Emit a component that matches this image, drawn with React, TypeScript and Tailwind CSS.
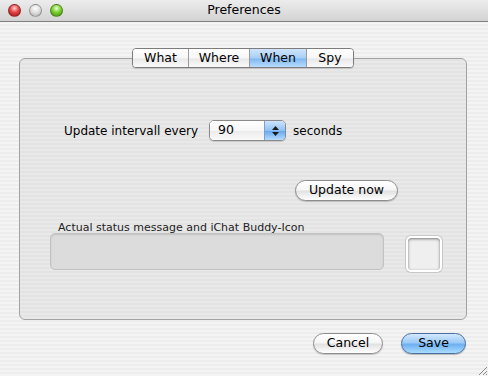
import React, { useState } from 'react';

const stripes =
  'bg-[repeating-linear-gradient(180deg,#ededed_0px,#ededed_2px,#f4f4f4_2px,#f4f4f4_4px)]';

// Aqua の白いボタン
const AquaButton: React.FC<{ label: string; width: string; primary?: boolean }> = ({ label, width, primary }) => (
  <button
    className={`${width} h-[21px] rounded-full border text-[12.5px] leading-none text-black ${
      primary
        ? 'border-[#4a6fa3] bg-[linear-gradient(180deg,#d4e9fd_0%,#9ccaf7_45%,#6fb0f2_55%,#a9dcff_100%)] shadow-[0_1px_1px_rgba(0,0,0,0.25)]'
        : 'border-[#8d8d8d] bg-[linear-gradient(180deg,#ffffff_0%,#f6f6f6_45%,#e2e2e2_55%,#ffffff_100%)] shadow-[0_1px_1px_rgba(0,0,0,0.2)]'
    }`}
  >
    {label}
  </button>
);

const TrafficLight: React.FC<{ color: string }> = ({ color }) => (
  <div className={`w-[13px] h-[13px] rounded-full border border-black/30 ${color}`} />
);

const App: React.FC = () => {
  const [tab, setTab] = useState('When'); // 選択中のタブ
  const tabs = ['What', 'Where', 'When', 'Spy'];
  const tabWidths: Record<string, string> = {
    What: 'w-[55px]',
    Where: 'w-[61px]',
    When: 'w-[57px]',
    Spy: 'w-[47px]',
  };

  return (
    <div className={`w-[488px] h-[376px] overflow-hidden flex flex-col ${stripes} font-['DejaVu_Sans','Liberation_Sans',sans-serif] text-black`}>
      {/* タイトルバー */}
      <div className="relative h-[22px] flex items-center border-b border-[#7f7f7f] bg-[linear-gradient(180deg,#ececec_0%,#e0e0e0_50%,#d2d2d2_100%)]">
        <div className="flex gap-[8px] pl-[8px]">
          <TrafficLight color="bg-[radial-gradient(circle_at_50%_30%,#ffd0d0_0%,#e24545_45%,#a51010_100%)]" />
          <TrafficLight color="bg-[radial-gradient(circle_at_50%_30%,#ffffff_0%,#dcdcdc_50%,#a9a9a9_100%)]" />
          <TrafficLight color="bg-[radial-gradient(circle_at_50%_30%,#eaffcf_0%,#7ccf2f_45%,#3c8a0c_100%)]" />
        </div>
        <div className="absolute inset-0 flex items-center justify-center text-[12.5px] pointer-events-none">
          Preferences
        </div>
      </div>

      {/* タブビュー */}
      <div className="flex flex-col pt-[26px] pl-[19px]">
        <div className="w-[448px] flex justify-center relative z-10 -mb-[10px]">
          <div className="flex h-[20px] rounded-[4px] border border-[#7c7c7c] overflow-hidden shadow-[0_1px_1px_rgba(0,0,0,0.15)]">
            {tabs.map((t, i) => (
              <button
                key={t}
                onClick={() => setTab(t)}
                className={`${tabWidths[t]} flex items-center justify-center text-[12.5px] ${
                  i > 0 ? 'border-l border-[#9a9a9a]' : ''
                } ${
                  tab === t
                    ? 'bg-[linear-gradient(180deg,#cfe4fb_0%,#a8cff7_50%,#80b8f1_55%,#b8dcff_100%)]'
                    : 'bg-[linear-gradient(180deg,#ffffff_0%,#f7f7f7_50%,#e8e8e8_55%,#fafafa_100%)]'
                }`}
              >
                {t}
              </button>
            ))}
          </div>
        </div>

        <div className="w-[448px] h-[262px] rounded-[6px] border border-[#a3a3a3] bg-[repeating-linear-gradient(180deg,#e3e3e3_0px,#e3e3e3_2px,#e9e9e9_2px,#e9e9e9_4px)] flex flex-col">
          {/* 更新間隔 */}
          <div className="flex items-center h-[21px] mt-[61px] pl-[44px] text-[12px]">
            <span>Update intervall every</span>
            <div className="ml-[11px] flex w-[77px] h-[21px] rounded-[5px] border border-[#8a8a8a] overflow-hidden bg-white shadow-[0_1px_1px_rgba(0,0,0,0.15)] text-[12.5px]">
              <div className="flex-1 flex items-center pl-[8px] bg-[linear-gradient(180deg,#ffffff_0%,#f7f7f7_50%,#ececec_55%,#fafafa_100%)]">90</div>
              <div className="w-[21px] flex flex-col items-center justify-center gap-[2px] border-l border-[#7e9fc6] bg-[linear-gradient(180deg,#cfe4fb_0%,#8fc2f6_50%,#6aaaf0_55%,#b5dcff_100%)]">
                <svg width="7" height="4" viewBox="0 0 7 4"><path d="M3.5 0L7 4H0z" fill="#1b1b1b" /></svg>
                <svg width="7" height="4" viewBox="0 0 7 4"><path d="M0 0h7L3.5 4z" fill="#1b1b1b" /></svg>
              </div>
            </div>
            <span className="ml-[7px]">seconds</span>
          </div>

          <div className="flex justify-end mt-[39px] pr-[68px]">
            <AquaButton label="Update now" width="w-[103px]" />
          </div>

          {/* ステータスメッセージ */}
          <div className="mt-[20px] pl-[38px] text-[11px] text-[#222] leading-[14px]">
            Actual status message and iChat Buddy-Icon
          </div>
          <div className="flex items-start pl-[30px] -mt-[2px]">
            <div className="w-[334px] h-[37px] rounded-[5px] border border-[#c2c2c2] bg-[#dcdcdc] shadow-[inset_0_1px_2px_rgba(0,0,0,0.12)]" />
            <div className="ml-[22px] mt-[3px] w-[36px] h-[36px] rounded-[5px] border-2 border-white bg-[#efefef] shadow-[inset_0_1px_3px_rgba(0,0,0,0.5),0_0_0_1px_#c8c8c8]" />
          </div>
        </div>
      </div>

      {/* 下部ボタン */}
      <div className="flex justify-end gap-[18px] pr-[22px] mt-[13px]">
        <AquaButton label="Cancel" width="w-[70px]" />
        <AquaButton label="Save" width="w-[65px]" primary />
      </div>

      {/* リサイズグリップ */}
      <div className="flex justify-end mt-auto">
        <svg width="11" height="11" viewBox="0 0 11 11">
          <path d="M10 2L2 10M10 6L6 10M10 9L9 10" stroke="#8a8a8a" strokeWidth="1" />
        </svg>
      </div>
    </div>
  );
};

export default App;
